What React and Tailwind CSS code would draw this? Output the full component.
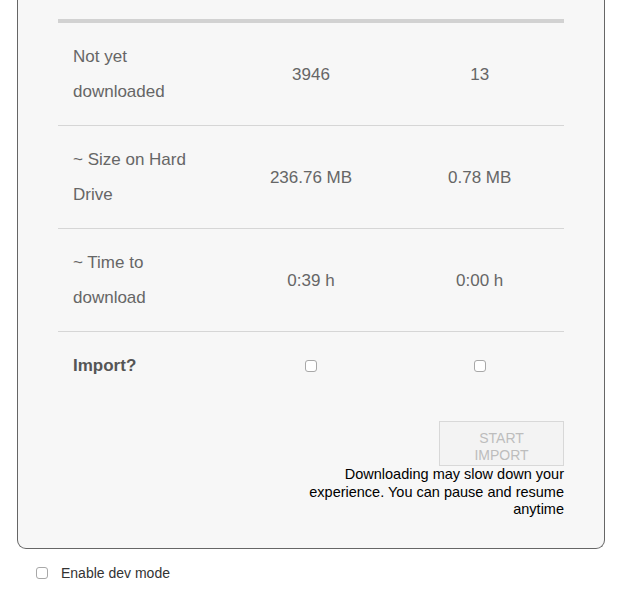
import React from "react";

function Box() {
  return (
    <span className="inline-block w-[12px] h-[12px] rounded-[3px] border border-[#a8a8a8] bg-white" />
  );
}

const rows = [
  ["Not yet downloaded", "3946", "13"],
  ["~ Size on Hard Drive", "236.76 MB", "0.78 MB"],
  ["~ Time to download", "0:39 h", "0:00 h"],
];

export default function App() {
  return (
    <div className="min-h-[593px] bg-white" style={{ fontFamily: '"Liberation Sans", Arial, sans-serif' }}>
      <div className="ml-[17px] w-[588px] border-x border-b border-[#666] rounded-b-[9px] bg-[#f7f7f7] px-[40px] pt-[19px] pb-[29px]">
        <div className="h-[4px] bg-[#d2d2d2]" />
        {rows.map((r, i) => (
          <div key={i} className="grid grid-cols-3 border-b border-[#d6d6d6] text-[17px] leading-[35px] text-[#666]">
            <div className="px-[15px] py-[16px]">{r[0]}</div>
            <div className="flex items-center justify-center py-[16px]">{r[1]}</div>
            <div className="flex items-center justify-center py-[16px]">{r[2]}</div>
          </div>
        ))}
        <div className="grid grid-cols-3 text-[17px] leading-[35px] text-[#555]">
          <div className="px-[15px] py-[16px] font-bold">Import?</div>
          <div className="flex items-center justify-center py-[16px]"><Box /></div>
          <div className="flex items-center justify-center py-[16px]"><Box /></div>
        </div>
        <div className="mt-[22px] flex flex-col items-end">
          <button className="w-[125px] border border-[#d8d8d8] bg-[#f3f3f3] px-4 pt-[8px] pb-[1px] text-[14px] leading-[17px] text-[#bdbdbd]">
            START IMPORT
          </button>
          <p className="max-w-[258px] text-right text-[14.5px] leading-[17.5px] text-black">
            Downloading may slow down your experience. You can pause and resume anytime
          </p>
        </div>
      </div>
      <div className="ml-[36px] mt-[14px] flex items-center gap-[13px] text-[14px] leading-[20px] text-[#333]">
        <Box />
        <span>Enable dev mode</span>
      </div>
    </div>
  );
}
